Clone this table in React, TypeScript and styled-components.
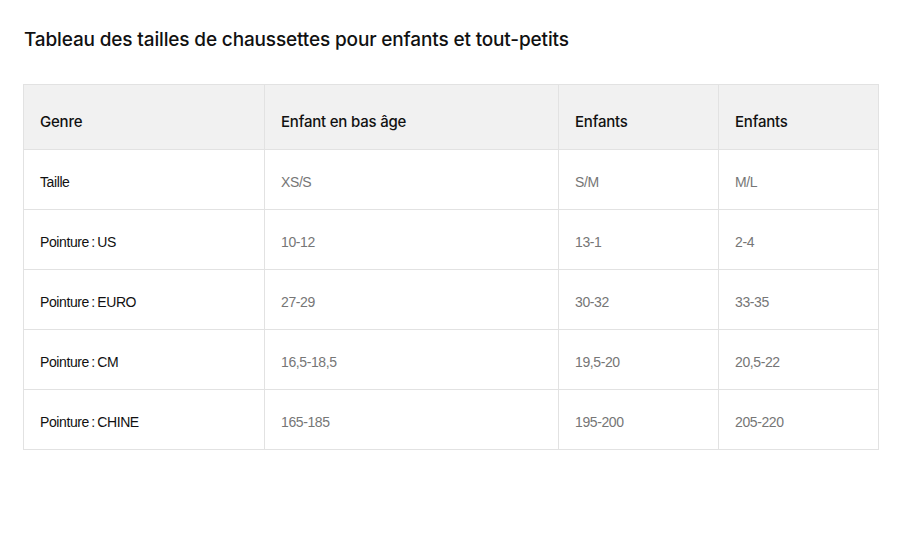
import React, { FC } from "react";
import styled, { createGlobalStyle } from "styled-components";

const GlobalStyle = createGlobalStyle`
  html, body {
    margin: 0;
    padding: 0;
    background: #ffffff;
  }
  body {
    font-family: "Liberation Sans", Arial, sans-serif;
    color: #111111;
  }
`;

const Page = styled.div`
  padding: 27px 30px 0 23px;
`;

const Title = styled.h1`
  margin: 0 0 31px 1px;
  font-family: Inter, "Liberation Sans", sans-serif;
  font-size: 19px;
  font-weight: 500;
  line-height: 26px;
  letter-spacing: -0.15px;
  color: #111111;
`;

const Table = styled.table`
  width: 855px;
  border-collapse: collapse;
  table-layout: fixed;
`;

const HeadCell = styled.th<{ $width: number }>`
  width: ${(p) => p.$width}px;
  height: 65px;
  box-sizing: border-box;
  padding: 9px 16px 0;
  background: #f1f1f1;
  border: 1px solid #e2e2e2;
  text-align: left;
  font-family: Inter, "Liberation Sans", sans-serif;
  font-size: 15px;
  font-weight: 500;
  letter-spacing: -0.2px;
  color: #111111;
`;

const Cell = styled.td<{ $muted?: boolean }>`
  height: 60px;
  box-sizing: border-box;
  padding: 5px 16px 0;
  border: 1px solid #e2e2e2;
  font-size: 14px;
  letter-spacing: -0.4px;
  color: ${(p) => (p.$muted ? "#767676" : "#111111")};
`;

const columns = [
  { label: "Genre", width: 241 },
  { label: "Enfant en bas âge", width: 294 },
  { label: "Enfants", width: 160 },
  { label: "Enfants", width: 160 },
];

const rows = [
  ["Taille", "XS/S", "S/M", "M/L"],
  ["Pointure\u202F:\u202FUS", "10-12", "13-1", "2-4"],
  ["Pointure\u202F:\u202FEURO", "27-29", "30-32", "33-35"],
  ["Pointure\u202F:\u202FCM", "16,5-18,5", "19,5-20", "20,5-22"],
  ["Pointure\u202F:\u202FCHINE", "165-185", "195-200", "205-220"],
];

const App: FC = () => {
  return (
    <>
      <GlobalStyle />
      <Page>
        <Title>Tableau des tailles de chaussettes pour enfants et tout-petits</Title>
        <Table>
          <thead>
            <tr>
              {columns.map((c, i) => (
                <HeadCell key={i} $width={c.width}>
                  {c.label}
                </HeadCell>
              ))}
            </tr>
          </thead>
          <tbody>
            {rows.map((r) => (
              <tr key={r[0]}>
                {r.map((v, i) => (
                  <Cell key={i} $muted={i > 0}>
                    {v}
                  </Cell>
                ))}
              </tr>
            ))}
          </tbody>
        </Table>
      </Page>
    </>
  );
};

export default App;
